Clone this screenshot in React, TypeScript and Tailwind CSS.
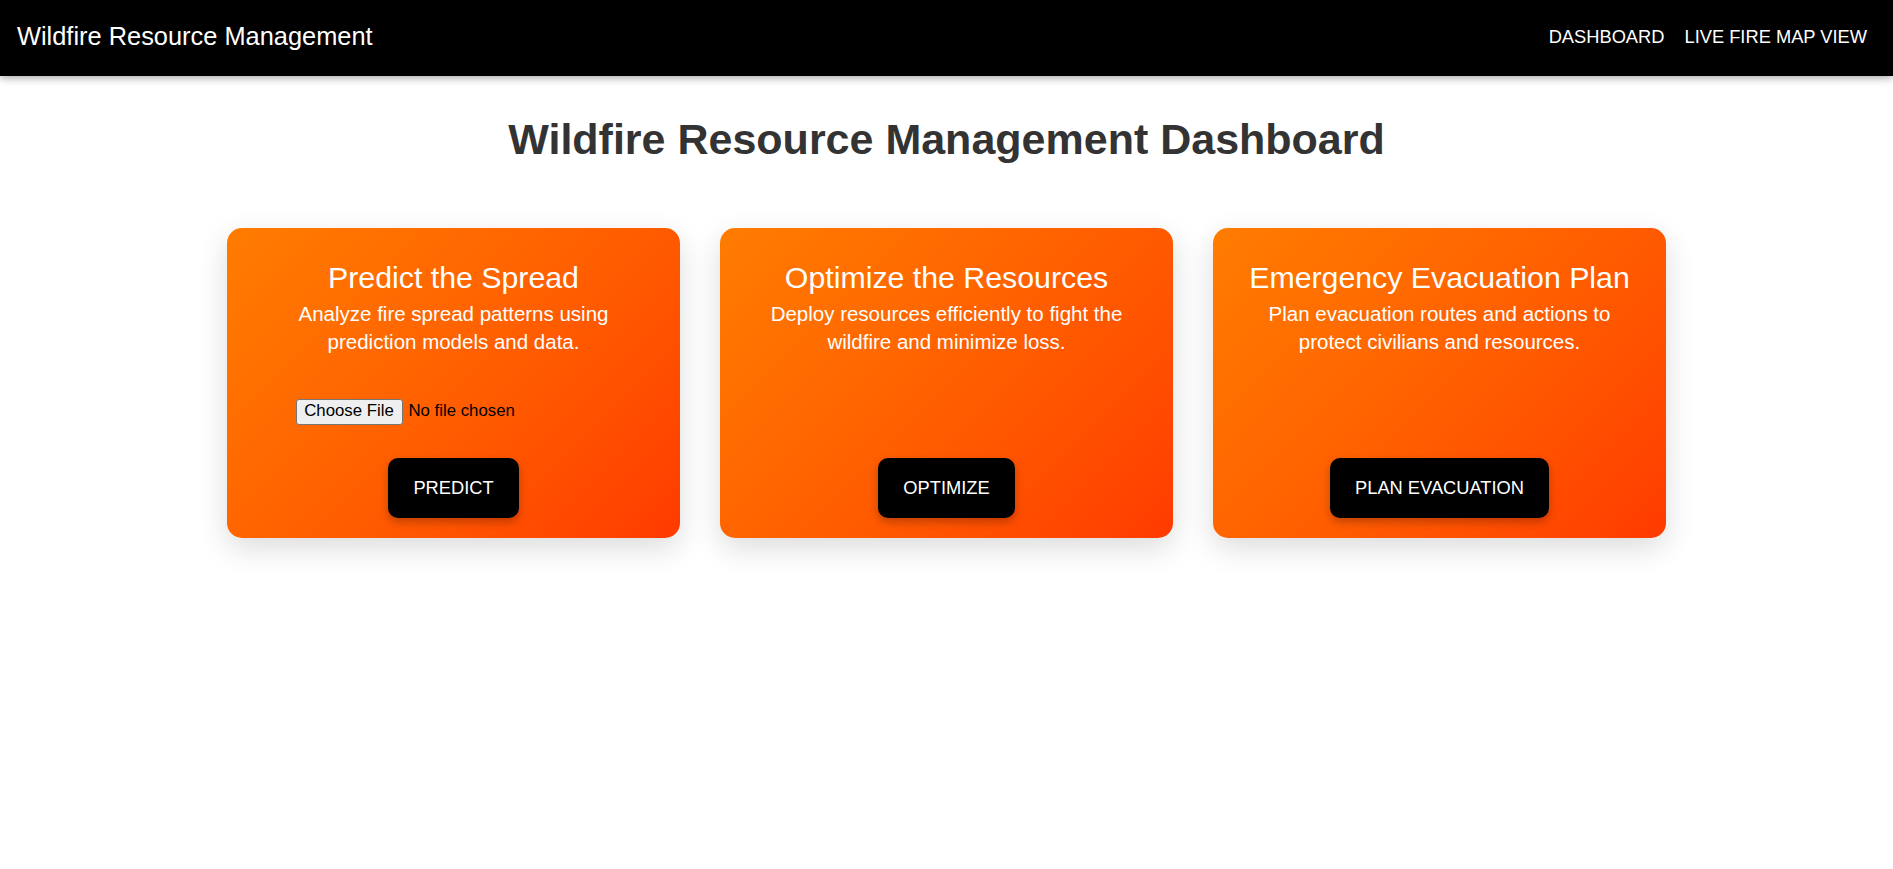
import React from 'react';

interface CardProps {
    title: string;
    description: string;
    action: string;
    withUpload?: boolean;
}

const FileInput: React.FC = () => (
    <div className="mt-[43px] w-[316px] h-[26px] flex items-center text-[16.8px] text-black">
        <span className="h-[26px] w-[107px] flex items-center justify-center bg-[#efefef] border border-[#767676] rounded-[3px] leading-none">
            Choose File
        </span>
        <span className="ml-[6px] leading-none">No file chosen</span>
    </div>
);

const ActionCard: React.FC<CardProps> = ({ title, description, action, withUpload }) => (
    <div className="w-[453px] h-[310px] rounded-[15px] bg-linear-135 from-[#ff7c00] to-[#ff3a00] shadow-[0_10px_30px_rgba(0,0,0,0.14)] text-white flex flex-col items-center pt-[33px] pb-[20px] px-[30px] text-center">
        <h2 className="text-[30.3px] leading-[34.5px]">{title}</h2>
        <p className="mt-[4px] text-[20.5px] leading-[28px]">{description}</p>
        {withUpload && <FileInput />}
        <button className="mt-auto h-[60px] px-[25px] bg-black rounded-[10px] text-[18.3px] text-white shadow-[0_4px_8px_rgba(0,0,0,0.25)]">
            {action}
        </button>
    </div>
);

export default function App() {
    return (
        <div className="min-h-screen bg-white font-['Liberation_Sans',Arial,sans-serif]">
            {/* Top bar */}
            <header className="h-[76px] bg-black text-white flex items-center justify-between pl-[17px] pr-[26px] pb-[3px] shadow-[0_2px_8px_rgba(0,0,0,0.35)] relative">
                <div className="text-[25.4px] leading-[29px]">Wildfire Resource Management</div>
                <nav className="flex gap-[20px] text-[18.3px] leading-[21px]">
                    <a>DASHBOARD</a>
                    <a>LIVE FIRE MAP VIEW</a>
                </nav>
            </header>

            <h1 className="mt-[38px] text-center text-[43px] leading-[50px] font-bold text-[#333333]">
                Wildfire Resource Management Dashboard
            </h1>

            <div className="mt-[64px] flex justify-center gap-[40px]">
                <ActionCard
                    title="Predict the Spread"
                    description="Analyze fire spread patterns using prediction models and data."
                    action="PREDICT"
                    withUpload
                />
                <ActionCard
                    title="Optimize the Resources"
                    description="Deploy resources efficiently to fight the wildfire and minimize loss."
                    action="OPTIMIZE"
                />
                <ActionCard
                    title="Emergency Evacuation Plan"
                    description="Plan evacuation routes and actions to protect civilians and resources."
                    action="PLAN EVACUATION"
                />
            </div>
        </div>
    );
}
